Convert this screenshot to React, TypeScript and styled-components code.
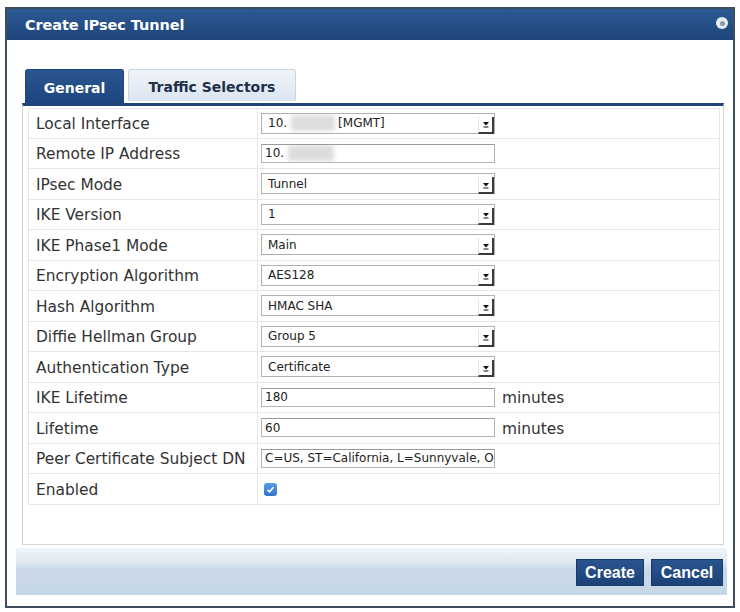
import React from 'react';
import styled, { createGlobalStyle } from 'styled-components';

const GlobalStyle = createGlobalStyle`
  html, body { margin: 0; padding: 0; background: #ffffff; }
  body { font-family: "DejaVu Sans", Verdana, sans-serif; }
  * { box-sizing: border-box; }
`;

const Page = styled.div`
  width: 740px;
  height: 612px;
  padding: 7px 5px 0 5px;
`;

const Dialog = styled.div`
  width: 730px;
  height: 601px;
  border: 2px solid #3e4d5d;
  background: #ffffff;
  display: flex;
  flex-direction: column;
`;

const TitleBar = styled.div`
  height: 31px;
  flex: none;
  display: flex;
  align-items: center;
  justify-content: space-between;
  padding: 0 5px 0 18px;
  background: linear-gradient(#2c5993, #1e457b);
  color: #ffffff;
  font-weight: bold;
  font-size: 14.5px;
  letter-spacing: -0.1px;
`;

const Close = styled.span`
  width: 12px;
  height: 12px;
  border-radius: 50%;
  background: #e8ecf2;
  display: flex;
  align-items: center;
  justify-content: center;
  margin-bottom: 3px;
  &::after {
    content: '';
    width: 5px;
    height: 5px;
    border-radius: 50%;
    background: #8d99a8;
  }
`;

const Body = styled.div`
  flex: 1;
  display: flex;
  flex-direction: column;
  padding: 29px 6px 11px 9px;
`;

const Tabs = styled.div`
  display: flex;
  align-items: flex-end;
  gap: 4px;
  padding-left: 9px;
  height: 34px;
`;

const Tab = styled.div<{ $active?: boolean }>`
  height: ${(p) => (p.$active ? '34px' : '32px')};
  margin-bottom: ${(p) => (p.$active ? '0' : '2px')};
  width: ${(p) => (p.$active ? '99px' : '168px')};
  display: flex;
  align-items: center;
  justify-content: center;
  border-radius: 3px 3px 0 0;
  font-weight: bold;
  font-size: 14px;
  padding-top: 3px;
  color: ${(p) => (p.$active ? '#ffffff' : '#1f2f4a')};
  background: ${(p) =>
    p.$active ? 'linear-gradient(#2a5590, #1d467f)' : 'linear-gradient(#f0f4f9, #dbe5f0)'};
  border: 1px solid ${(p) => (p.$active ? '#1d467f' : '#c9d5e3')};
  border-bottom: none;
`;

const FormBox = styled.div`
  height: 442px;
  margin: 0 3px 0 6px;
  border-top: 3px solid #1f4578;
  border-left: 1px solid #d3d3d3;
  border-right: 1px solid #d3d3d3;
  border-bottom: 1px solid #d3d3d3;
  padding: 2px 3px 0 5px;
`;

const Row = styled.div`
  display: grid;
  grid-template-columns: 230px 1fr;
  height: 30.5px;
  &:first-child > div {
    border-top: 1px solid #e6e6e6;
  }
`;

const Label = styled.div`
  display: flex;
  align-items: center;
  padding: 2px 0 0 7px;
  font-size: 15.4px;
  color: #333333;
  border-left: 1px solid #e6e6e6;
  border-right: 1px solid #e6e6e6;
  border-bottom: 1px solid #e6e6e6;
  white-space: nowrap;
`;

const Value = styled.div`
  display: flex;
  align-items: center;
  gap: 7px;
  padding-left: 3px;
  border-right: 1px solid #e6e6e6;
  border-bottom: 1px solid #e6e6e6;
`;

const SelectBox = styled.div`
  width: 234px;
  height: 21px;
  border: 1px solid #b0b0b0;
  background: #ffffff;
  display: flex;
  align-items: stretch;
  font-size: 12px;
  color: #222222;
`;

const SelectText = styled.div`
  flex: 1;
  display: flex;
  align-items: center;
  padding-left: 6px;
  white-space: nowrap;
  overflow: hidden;
`;

const Arrow = styled.div`
  width: 16px;
  display: flex;
  align-items: center;
  justify-content: center;
  border-left: 1px solid #e2e2e2;
  border-right: 2px solid #3a3a3a;
  border-bottom: 2px solid #3a3a3a;
  margin: 3px 0 -1px 0;
`;

const TextInput = styled.div`
  width: 234px;
  height: 19px;
  border: 1px solid #b4b4b4;
  border-top-color: #9a9a9a;
  background: #ffffff;
  display: flex;
  align-items: center;
  padding-left: 3px;
  font-size: 12px;
  color: #222222;
  white-space: nowrap;
  overflow: hidden;
`;

const Redacted = styled.span<{ $w: number }>`
  display: inline-block;
  width: ${(p) => p.$w}px;
  height: 16px;
  margin: 0 3px 0 4px;
  background: #dddddd;
  filter: blur(2px);
`;

const Unit = styled.span`
  font-size: 15.4px;
  color: #333333;
  padding-top: 2px;
`;

const Check = styled.div`
  width: 13px;
  height: 13px;
  margin: 2px 0 0 3px;
  border-radius: 3px;
  background: linear-gradient(#5b9ce6, #2f74cf);
  display: flex;
  align-items: center;
  justify-content: center;
`;

const Footer = styled.div`
  margin-top: 3px;
  height: 47px;
  display: flex;
  align-items: center;
  justify-content: flex-end;
  gap: 7px;
  padding: 0 4px 0 0;
  background: linear-gradient(#f1f5f9 0%, #dfe8f1 30%, #c9d9e8 45%, #c6d7e7 100%);
`;

const Button = styled.button<{ $w: number }>`
  width: ${(p) => p.$w}px;
  height: 27px;
  margin-top: 2px;
  border: 1px solid #173a66;
  background: linear-gradient(#2a5490, #1c4277);
  color: #ffffff;
  font-family: "Liberation Sans", Arial, sans-serif;
  font-weight: bold;
  font-size: 16px;
  padding: 0;
  cursor: pointer;
`;

const ArrowIcon = () => (
  <svg width="8" height="8" viewBox="0 0 8 8">
    <path d="M1 2 L7 2 L4 5.5 Z" fill="#111" />
    <rect x="1.5" y="6.5" width="5" height="1" fill="#111" />
  </svg>
);

const Select = ({ children }: { children: React.ReactNode }) => (
  <SelectBox>
    <SelectText>{children}</SelectText>
    <Arrow>
      <ArrowIcon />
    </Arrow>
  </SelectBox>
);

type Field = { label: string; kind: 'select' | 'text' | 'check'; value?: React.ReactNode; unit?: string };

const fields: Field[] = [
  {
    label: 'Local Interface',
    kind: 'select',
    value: (
      <>
        10.<Redacted $w={44} />[MGMT]
      </>
    ),
  },
  {
    label: 'Remote IP Address',
    kind: 'text',
    value: (
      <>
        10.<Redacted $w={46} />
      </>
    ),
  },
  { label: 'IPsec Mode', kind: 'select', value: 'Tunnel' },
  { label: 'IKE Version', kind: 'select', value: '1' },
  { label: 'IKE Phase1 Mode', kind: 'select', value: 'Main' },
  { label: 'Encryption Algorithm', kind: 'select', value: 'AES128' },
  { label: 'Hash Algorithm', kind: 'select', value: 'HMAC SHA' },
  { label: 'Diffie Hellman Group', kind: 'select', value: 'Group 5' },
  { label: 'Authentication Type', kind: 'select', value: 'Certificate' },
  { label: 'IKE Lifetime', kind: 'text', value: '180', unit: 'minutes' },
  { label: 'Lifetime', kind: 'text', value: '60', unit: 'minutes' },
  { label: 'Peer Certificate Subject DN', kind: 'text', value: 'C=US, ST=California, L=Sunnyvale, O' },
  { label: 'Enabled', kind: 'check' },
];

export default function App() {
  return (
    <>
      <GlobalStyle />
      <Page>
        <Dialog>
          <TitleBar>
            <span>Create IPsec Tunnel</span>
            <Close />
          </TitleBar>
          <Body>
            <Tabs>
              <Tab $active>General</Tab>
              <Tab>Traffic Selectors</Tab>
            </Tabs>
            <FormBox>
              {fields.map((f) => (
                <Row key={f.label}>
                  <Label>{f.label}</Label>
                  <Value>
                    {f.kind === 'select' && <Select>{f.value}</Select>}
                    {f.kind === 'text' && <TextInput>{f.value}</TextInput>}
                    {f.kind === 'check' && (
                      <Check>
                        <svg width="9" height="9" viewBox="0 0 9 9">
                          <path d="M1.5 4.8 L3.6 6.8 L7.5 2.2" stroke="#fff" strokeWidth="1.6" fill="none" />
                        </svg>
                      </Check>
                    )}
                    {f.unit && <Unit>{f.unit}</Unit>}
                  </Value>
                </Row>
              ))}
            </FormBox>
            <Footer>
              <Button $w={68}>Create</Button>
              <Button $w={72}>Cancel</Button>
            </Footer>
          </Body>
        </Dialog>
      </Page>
    </>
  );
}
